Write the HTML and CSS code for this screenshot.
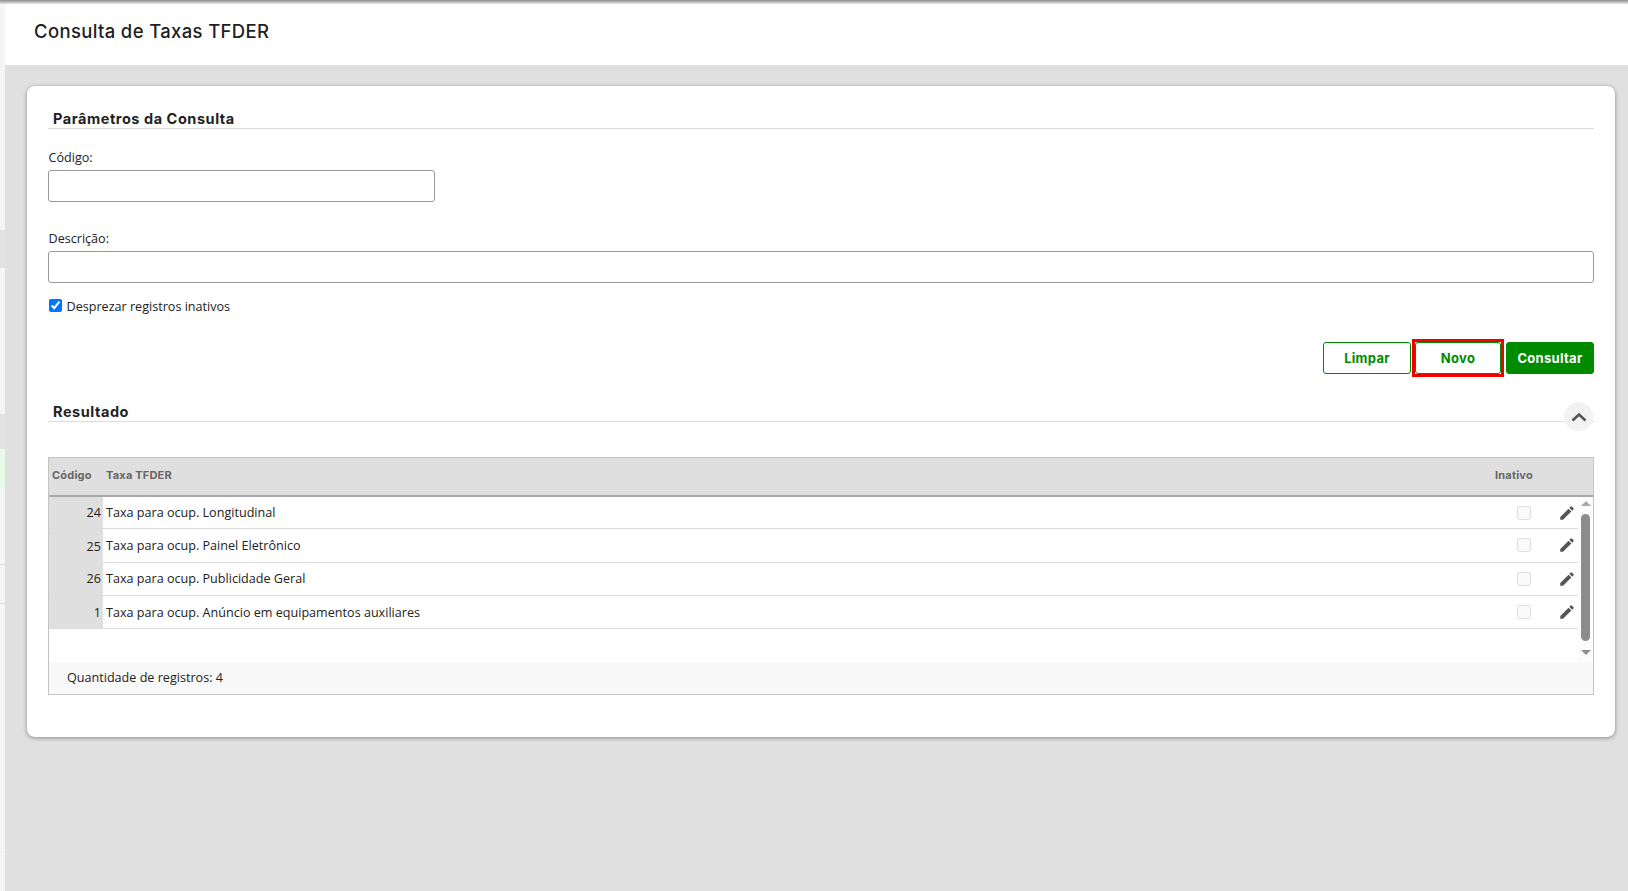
FILE: index.html
```html
<!DOCTYPE html>
<html lang="pt-BR">
<head>
    <meta charset="UTF-8">
    <title>Consulta de Taxas TFDER</title>
    <link rel="stylesheet" href="styles.css">
</head>
<body>
    <div class="top-shade"></div>
    <div class="layout">
        <div class="side-strip">
            <div class="strip-seg seg-a"></div>
            <div class="strip-seg seg-gray seg-b"></div>
            <div class="strip-seg seg-c"></div>
            <div class="strip-seg seg-gray seg-d"></div>
            <div class="strip-seg seg-green seg-e"></div>
            <div class="strip-seg seg-f"></div>
            <div class="strip-seg seg-g"></div>
            <div class="strip-seg seg-h"></div>
            <div class="strip-seg seg-i"></div>
        </div>
        <main class="main">
            <header class="page-header">
                <h1>Consulta de Taxas TFDER</h1>
            </header>
            <div class="content">
                <section class="card">
                    <h2 class="section-title">Parâmetros da Consulta</h2>

                    <div class="field field-code">
                        <label for="codigo">Código:</label>
                        <input type="text" id="codigo">
                    </div>
                    <div class="field field-desc">
                        <label for="descricao">Descrição:</label>
                        <input type="text" id="descricao">
                    </div>
                    <label class="check-row">
                        <input type="checkbox" checked>
                        <span>Desprezar registros inativos</span>
                    </label>

                    <div class="actions">
                        <button class="btn btn-outline">Limpar</button>
                        <button class="btn btn-outline btn-marked">Novo</button>
                        <button class="btn btn-solid">Consultar</button>
                    </div>

                    <div class="result-head">
                        <h2 class="section-title">Resultado</h2>
                        <button class="collapse-btn" aria-label="Recolher">
                            <svg width="16" height="10" viewBox="0 0 16 10"><polyline points="1.5,8.5 8,2.5 14.5,8.5" fill="none" stroke="#555" stroke-width="2.6"/></svg>
                        </button>
                    </div>

                    <div class="grid">
                        <div class="grid-head">
                            <div class="col-code">Código</div>
                            <div class="col-name">Taxa TFDER</div>
                            <div class="col-flag">Inativo</div>
                        </div>
                        <div class="grid-body">
                            <div class="rows">
                                <div class="row">
                                    <div class="col-code">24</div>
                                    <div class="col-name">Taxa para ocup. Longitudinal</div>
                                    <div class="col-flag"><input type="checkbox" disabled></div>
                                    <div class="col-edit"><svg viewBox="0 0 24 24"><path d="M3 17.25V21h3.75L17.81 9.94l-3.75-3.75L3 17.25zM20.71 7.04a1 1 0 0 0 0-1.41l-2.34-2.34a1 1 0 0 0-1.41 0l-1.83 1.83 3.75 3.75 1.83-1.83z"/></svg></div>
                                </div>
                                <div class="row">
                                    <div class="col-code">25</div>
                                    <div class="col-name">Taxa para ocup. Painel Eletrônico</div>
                                    <div class="col-flag"><input type="checkbox" disabled></div>
                                    <div class="col-edit"><svg viewBox="0 0 24 24"><path d="M3 17.25V21h3.75L17.81 9.94l-3.75-3.75L3 17.25zM20.71 7.04a1 1 0 0 0 0-1.41l-2.34-2.34a1 1 0 0 0-1.41 0l-1.83 1.83 3.75 3.75 1.83-1.83z"/></svg></div>
                                </div>
                                <div class="row">
                                    <div class="col-code">26</div>
                                    <div class="col-name">Taxa para ocup. Publicidade Geral</div>
                                    <div class="col-flag"><input type="checkbox" disabled></div>
                                    <div class="col-edit"><svg viewBox="0 0 24 24"><path d="M3 17.25V21h3.75L17.81 9.94l-3.75-3.75L3 17.25zM20.71 7.04a1 1 0 0 0 0-1.41l-2.34-2.34a1 1 0 0 0-1.41 0l-1.83 1.83 3.75 3.75 1.83-1.83z"/></svg></div>
                                </div>
                                <div class="row">
                                    <div class="col-code">1</div>
                                    <div class="col-name">Taxa para ocup. Anúncio em equipamentos auxiliares</div>
                                    <div class="col-flag"><input type="checkbox" disabled></div>
                                    <div class="col-edit"><svg viewBox="0 0 24 24"><path d="M3 17.25V21h3.75L17.81 9.94l-3.75-3.75L3 17.25zM20.71 7.04a1 1 0 0 0 0-1.41l-2.34-2.34a1 1 0 0 0-1.41 0l-1.83 1.83 3.75 3.75 1.83-1.83z"/></svg></div>
                                </div>
                            </div>
                            <div class="scrollbar">
                                <span class="arrow arrow-up"></span>
                                <span class="thumb"></span>
                                <span class="arrow arrow-down"></span>
                            </div>
                        </div>
                        <div class="grid-foot">Quantidade de registros: 4</div>
                    </div>
                </section>
            </div>
        </main>
    </div>
</body>
</html>
```

FILE: styles.css
```css
:root {
    --page-bg: #e0e0e0;
    --green: #008a00;
    --line: #dcdcdc;
    --text: #222222;
}
* {
    box-sizing: border-box;
}
html, body {
    height: 100%;
}
body {
    margin: 0;
    display: flex;
    flex-direction: column;
    overflow: hidden;
    font-family: 'Open Sans', sans-serif;
    font-size: 12.6px;
    color: var(--text);
    background-color: var(--page-bg);
}
.top-shade {
    height: 4px;
    flex: none;
    background: linear-gradient(#8c8c8c, #e8e8e8);
}
.layout {
    flex: 1;
    display: flex;
    min-height: 0;
}

/* collapsed menu behind the page */
.side-strip {
    width: 5px;
    flex: none;
    display: flex;
    flex-direction: column;
    background-color: #f5f5f5;
}
.strip-seg { flex: none; }
.seg-gray { background-color: #e2e2e2; }
.seg-green { background-color: #e8fbe8; }
.seg-a { height: 226px; }
.seg-b { height: 38px; }
.seg-c { height: 146px; }
.seg-d { height: 35px; }
.seg-e { height: 38px; }
.seg-f { height: 78px; border-bottom: 1px solid #dddddd; }
.seg-g { height: 39px; border-bottom: 1px solid #dddddd; }
.seg-h { height: 249px; border-bottom: 1px solid #eeeeee; }
.seg-i { height: 38px; }

.main {
    flex: 1;
    min-width: 0;
    display: flex;
    flex-direction: column;
}
.page-header {
    height: 61px;
    flex: none;
    background-color: #ffffff;
    padding: 14px 0 0 29px;
}
.page-header h1 {
    margin: 0;
    font-family: 'Inter', sans-serif;
    font-size: 18.5px;
    font-weight: 500;
    letter-spacing: 0.35px;
    line-height: 26px;
    color: #1f1f1f;
}
.content {
    flex: 1;
    padding: 21px 13px 0 22px;
}
.card {
    height: 651px;
    background-color: #ffffff;
    border-radius: 8px;
    box-shadow: 0 1px 4px rgba(0, 0, 0, 0.4);
    padding: 22px 21px 0;
}
.section-title {
    margin: 0;
    padding: 2px 0 0 5px;
    height: 21px;
    border-bottom: 1px solid var(--line);
    font-family: 'Inter', sans-serif;
    font-size: 14.5px;
    font-weight: 700;
    letter-spacing: 0.55px;
    line-height: 18px;
    color: #222222;
}
.field label {
    display: block;
    padding-left: 0.5px;
    line-height: 16px;
    margin-bottom: 4px;
}
.field input {
    display: block;
    height: 32px;
    width: 100%;
    border: 1px solid #999999;
    border-radius: 3px;
    background-color: #ffffff;
}
.field-code {
    width: 387px;
    margin-top: 21px;
}
.field-desc {
    margin-top: 29px;
}
.check-row {
    display: flex;
    align-items: center;
    gap: 4.5px;
    margin-top: 13px;
    height: 19px;
    line-height: 17px;
}
.check-row span {
    margin-top: 2px;
}
.check-row input {
    width: 13px;
    height: 13px;
    margin: 0 0 0 1px;
}
.actions {
    display: flex;
    justify-content: flex-end;
    gap: 4px;
    margin-top: 27px;
}
.btn {
    height: 32px;
    width: 88px;
    border-radius: 3px;
    font-family: 'Inter', sans-serif;
    font-size: 13px;
    font-weight: 700;
    letter-spacing: 0.3px;
    padding: 0;
    border: 1px solid var(--green);
    cursor: pointer;
}
.btn-outline {
    background-color: #ffffff;
    color: var(--green);
    padding-bottom: 1px;
}
.btn-solid {
    background-color: var(--green);
    color: #ffffff;
}
.btn-marked {
    width: 86px;
    position: relative;
    margin-right: 1px;
}
/* the red frame drawn over the button */
.btn-marked::after {
    content: "";
    position: absolute;
    inset: -4px;
    border: 3px solid #f00000;
}
.result-head {
    position: relative;
    margin-top: 27px;
}
.collapse-btn {
    position: absolute;
    right: 1px;
    top: 1px;
    width: 29px;
    height: 29px;
    border: none;
    border-radius: 50%;
    background-color: #f2f2f2;
    padding: 0;
    display: flex;
    align-items: center;
    justify-content: center;
}
.grid {
    margin-top: 35px;
    height: 238px;
    border: 1px solid #c4c4c4;
    display: flex;
    flex-direction: column;
}
.grid-head {
    height: 39px;
    flex: none;
    display: flex;
    align-items: center;
    padding-bottom: 4px;
    background-color: #dfdfdf;
    border-bottom: 2px solid #a8a8a8;
    font-family: 'Inter', sans-serif;
    font-size: 11px;
    font-weight: 700;
    letter-spacing: 0.2px;
    color: #666666;
}
.grid-head .col-code {
    width: 55px;
    padding-left: 3px;
}
.grid-head .col-name {
    flex: 1;
    padding-left: 2px;
}
.grid-head .col-flag {
    width: 98px;
}
.grid-body {
    height: 165px;
    flex: none;
    display: flex;
}
.rows {
    flex: 1;
}
.row {
    height: 33.25px;
    display: flex;
    align-items: center;
    border-bottom: 1px solid var(--line);
}
.row:first-child {
    height: 32.25px;
}
.row .col-code {
    width: 54px;
    align-self: stretch;
    display: flex;
    align-items: center;
    justify-content: flex-end;
    padding: 0.5px 2px 0 0;
    background-color: #dfdfdf;
}
.row:nth-child(2) .col-code {
    margin-bottom: -1px;
}
.row .col-name {
    flex: 1;
    padding: 0.5px 0 0 3px;
}
.row .col-flag {
    width: 14px;
    margin-right: 27px;
    display: flex;
}
.row .col-flag input {
    width: 14px;
    height: 14px;
    margin: 0;
    opacity: 0.7;
}
.row .col-edit {
    width: 20px;
    display: flex;
}
.col-edit svg {
    width: 18px;
    height: 18px;
    fill: #555555;
}
.scrollbar {
    width: 15px;
    flex: none;
    background-color: #fcfcfc;
    display: flex;
    flex-direction: column;
    align-items: center;
    padding-top: 4px;
}
.arrow {
    width: 0;
    height: 0;
    border-left: 5px solid transparent;
    border-right: 5px solid transparent;
}
.arrow-up { border-bottom: 5px solid #a8a8a8; }
.arrow-down { border-top: 5px solid #8c8c8c; margin-top: 9px; }
.thumb {
    width: 9px;
    height: 127px;
    margin-top: 8px;
    border-radius: 5px;
    background-color: #8c8c8c;
}
.grid-foot {
    flex: 1;
    background-color: #f9f9f9;
    padding: 0 0 2px 18px;
    display: flex;
    align-items: center;
}
```
